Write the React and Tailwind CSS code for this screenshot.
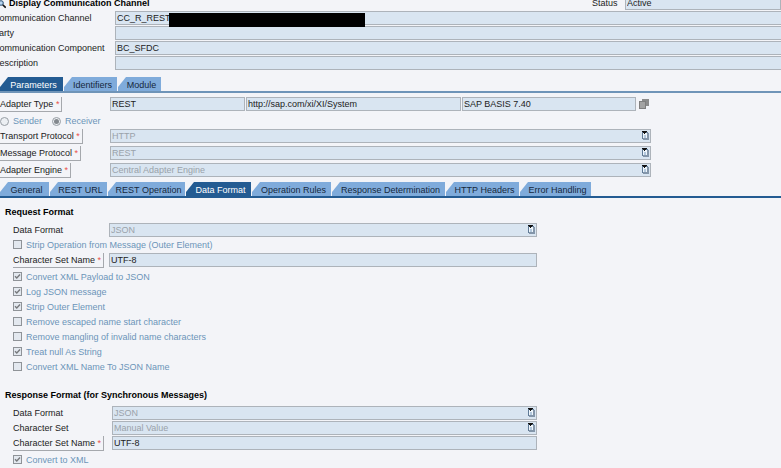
import { useState } from 'react';
import clsx from 'clsx';

const MAIN_TABS = [
  { name: 'Parameters', width: 'w-[63px]' },
  { name: 'Identifiers', width: 'w-[53px]' },
  { name: 'Module', width: 'w-[43px]' },
];

const ADAPTER_TABS = [
  { name: 'General', width: 'w-[49px]' },
  { name: 'REST URL', width: 'w-[57px]' },
  { name: 'REST Operation', width: 'w-[77px]' },
  { name: 'Data Format', width: 'w-[65px]' },
  { name: 'Operation Rules', width: 'w-[79px]' },
  { name: 'Response Determination', width: 'w-[113px]' },
  { name: 'HTTP Headers', width: 'w-[73px]' },
  { name: 'Error Handling', width: 'w-[71px]' },
];

const REQUEST_OPTIONS = [
  { label: 'Convert XML Payload to JSON', checked: true },
  { label: 'Log JSON message', checked: true },
  { label: 'Strip Outer Element', checked: true },
  { label: 'Remove escaped name start character', checked: false },
  { label: 'Remove mangling of invalid name characters', checked: false },
  { label: 'Treat null As String', checked: true },
  { label: 'Convert XML Name To JSON Name', checked: false },
];

const FIELD = 'h-[14px] w-full min-w-0 appearance-none border border-[#adb3ba] bg-[#d9e5f1] px-px leading-3';

function TextField({ id, value, label, className }) {
  return (
    <input id={id} type="text" readOnly defaultValue={value} aria-label={label} className={clsx(FIELD, 'text-[#222]', className)} />
  );
}

function SelectField({ id, value, className }) {
  return (
    <div className={clsx('relative h-[14px] w-full min-w-0', className)}>
      <select id={id} disabled className={clsx(FIELD, 'block text-[#9aa2aa] opacity-100')}>
        <option>{value}</option>
      </select>
      <svg className="pointer-events-none absolute right-[2px] top-[2px]" width="7" height="9" viewBox="0 0 7 9" shapeRendering="crispEdges">
        <rect x="0" y="1" width="6" height="7" fill="#5f7a96" />
        <rect x="1" y="7" width="6" height="2" fill="#8496aa" />
        <rect x="5" y="2" width="2" height="6" fill="#8496aa" />
        <rect x="1" y="2" width="4" height="5" fill="#eef5fb" />
        <rect x="2" y="4" width="2" height="3" fill="#b3c8dd" />
        <path d="M0 0h5v1h-1v1h-1v1h-1v-1h-1v-1h-1z" fill="#111" />
      </svg>
    </div>
  );
}

// Raised label used for mandatory fields
function RequiredLabel({ htmlFor, children }) {
  return (
    <label htmlFor={htmlFor} className="inline-block h-[15px] whitespace-nowrap border-b border-r border-[#a5a8ad] pr-[2px] leading-[14px]">
      {children} <span className="text-[#e8504a]">*</span>
    </label>
  );
}

function CheckField({ label, checked }) {
  return (
    <label className="flex h-[15px] items-center gap-1 pl-[13px] text-[#6c94b8]">
      <span className="relative flex">
        <input type="checkbox" disabled defaultChecked={checked} className="size-[9px] appearance-none border border-[#8f9398] bg-[#e3e8ef]" />
        {checked && (
          <svg className="absolute inset-0" width="9" height="9" viewBox="0 0 9 9" fill="none" stroke="#77797c" strokeWidth="1.4">
            <path d="M2 4.2 3.8 6 7 2.6" />
          </svg>
        )}
      </span>
      {label}
    </label>
  );
}

function RadioField({ label, checked }) {
  return (
    <label className="flex items-center gap-1 text-[#6c94b8]">
      <span className="relative flex">
        <input type="radio" name="direction" disabled defaultChecked={checked} className="size-[9px] appearance-none rounded-full border border-[#979da4] bg-[#eceff3]" />
        {checked && <span className="absolute inset-[2px] rounded-full bg-[#83888e]" />}
      </span>
      {label}
    </label>
  );
}

function TabStrip({ tabs, initial, className }) {
  const [active, setActive] = useState(initial);

  return (
    <div role="tablist" className={clsx('flex gap-px border-b-2', className)}>
      {tabs.map((tab) => (
        <button
          key={tab.name}
          type="button"
          role="tab"
          aria-selected={tab.name === active}
          onClick={() => setActive(tab.name)}
          className={clsx(
            'h-[14px] shrink-0 whitespace-nowrap pl-1 text-center leading-4 [clip-path:polygon(0_10px,8px_0,100%_0,100%_100%,0_100%)]',
            tab.width,
            tab.name === active ? 'bg-[#235b92] text-white' : 'bg-[#7fabdb] text-[#16283c]',
          )}
        >
          {tab.name}
        </button>
      ))}
    </div>
  );
}

function ChannelHeader() {
  return (
    <header>
      <div className="-mt-1 flex h-[14px] items-center">
        <h1 className="-ml-[6px] flex flex-1 items-center gap-[3px] font-bold text-black">
          <svg width="12" height="12" viewBox="0 0 12 12" fill="none">
            <path d="M0 1h5v8H0z" fill="#fff" stroke="#555" />
            <circle cx="7" cy="6" r="2.3" fill="#b9d6f2" stroke="#264d73" />
            <path d="m8.7 7.7 3 3" stroke="#111" strokeWidth="1.6" />
          </svg>
          Display Communication Channel
        </h1>
        <label htmlFor="status" className="w-[33px]">Status</label>
        <div className="w-[156px]">
          <TextField id="status" value="Active" className="block" />
        </div>
      </div>
      <div className="-ml-[7px] -mr-px mt-px">
        <div className="flex h-[15px]">
          <label htmlFor="channel" className="w-[122px] shrink-0 leading-[14px]">Communication Channel</label>
          <div className="relative h-[14px] flex-1">
            <TextField id="channel" value="CC_R_REST_" className="block" />
            <span className="absolute left-[54px] top-[2px] h-[14px] w-[196px] bg-black" />
          </div>
        </div>
        <div className="flex h-[15px]">
          <label htmlFor="party" className="w-[122px] shrink-0 leading-[14px]">Party</label>
          <TextField id="party" value="" />
        </div>
        <div className="flex h-[15px]">
          <label htmlFor="component" className="w-[122px] shrink-0 whitespace-nowrap leading-[14px]">Communication Component</label>
          <TextField id="component" value="BC_SFDC" />
        </div>
        <div className="flex h-[15px]">
          <label htmlFor="description" className="w-[122px] shrink-0 leading-[14px]">Description</label>
          <TextField id="description" value="" />
        </div>
      </div>
    </header>
  );
}

function AdapterSettings() {
  return (
    <section className="pt-1">
      <div className="flex h-[14px] items-start">
        <div className="flex w-[110px] shrink-0">
          <RequiredLabel htmlFor="adapterType">Adapter Type</RequiredLabel>
        </div>
        <div className="grid w-full max-w-[526px] grid-cols-[135fr_215fr_174fr] gap-px">
          <TextField id="adapterType" value="REST" />
          <TextField value="http://sap.com/xi/XI/System" label="Adapter namespace" />
          <TextField value="SAP BASIS 7.40" label="Software component version" />
        </div>
        <svg className="ml-[3px] mt-[2px] shrink-0" width="10" height="10" viewBox="0 0 10 10" shapeRendering="crispEdges">
          <path d="M3 0h7v7H3z" fill="#8c8c8c" />
          <path d="M0 2h7v8H0z" fill="#7f7f7f" />
          <path d="M1 3h5v6H1z" fill="#a3a3a3" />
        </svg>
      </div>
      <div className="flex h-[18px] items-center gap-[10px] pt-[2px]">
        <RadioField label="Sender" checked={false} />
        <RadioField label="Receiver" checked />
      </div>
      <div className="flex flex-col gap-[2px]">
        <div className="flex">
          <div className="flex w-[110px] shrink-0">
            <RequiredLabel htmlFor="transport">Transport Protocol</RequiredLabel>
          </div>
          <SelectField id="transport" value="HTTP" className="max-w-[541px]" />
        </div>
        <div className="flex">
          <div className="flex w-[110px] shrink-0">
            <RequiredLabel htmlFor="message">Message Protocol</RequiredLabel>
          </div>
          <SelectField id="message" value="REST" className="max-w-[541px]" />
        </div>
        <div className="flex">
          <div className="flex w-[110px] shrink-0">
            <RequiredLabel htmlFor="engine">Adapter Engine</RequiredLabel>
          </div>
          <SelectField id="engine" value="Central Adapter Engine" className="max-w-[541px]" />
        </div>
      </div>
    </section>
  );
}

function RequestFormat() {
  return (
    <section className="pt-[7px]">
      <h2 className="h-[18px] pl-[5px] font-bold leading-[14px] text-black">Request Format</h2>
      <div className="flex pl-[13px]">
        <label htmlFor="requestFormat" className="w-24 shrink-0 leading-[14px]">Data Format</label>
        <SelectField id="requestFormat" value="JSON" className="max-w-[428px]" />
      </div>
      <CheckField label="Strip Operation from Message (Outer Element)" checked={false} />
      <div className="flex pb-px pl-[13px] pt-px">
        <div className="flex w-24 shrink-0">
          <RequiredLabel htmlFor="requestCharset">Character Set Name</RequiredLabel>
        </div>
        <TextField id="requestCharset" value="UTF-8" className="max-w-[428px]" />
      </div>
      {REQUEST_OPTIONS.map((option) => (
        <CheckField key={option.label} label={option.label} checked={option.checked} />
      ))}
    </section>
  );
}

function ResponseFormat() {
  return (
    <section className="pt-[14px]">
      <h2 className="h-[18px] pl-[5px] font-bold leading-[14px] text-black">Response Format (for Synchronous Messages)</h2>
      <div className="flex flex-col gap-px pl-[13px]">
        <div className="flex">
          <label htmlFor="responseFormat" className="w-[99px] shrink-0 leading-[14px]">Data Format</label>
          <SelectField id="responseFormat" value="JSON" className="max-w-[425px]" />
        </div>
        <div className="flex">
          <label htmlFor="charset" className="w-[99px] shrink-0 leading-[14px]">Character Set</label>
          <SelectField id="charset" value="Manual Value" className="max-w-[425px]" />
        </div>
        <div className="flex pb-px">
          <div className="flex w-[99px] shrink-0">
            <RequiredLabel htmlFor="responseCharset">Character Set Name</RequiredLabel>
          </div>
          <TextField id="responseCharset" value="UTF-8" className="max-w-[425px]" />
        </div>
      </div>
      <CheckField label="Convert to XML" checked />
    </section>
  );
}

export default function App() {
  return (
    <main className="min-h-screen overflow-hidden bg-[#f3f4f8] font-['Liberation_Sans',Arial,sans-serif] text-[9px] leading-3 text-[#222]">
      <ChannelHeader />
      <TabStrip tabs={MAIN_TABS} initial="Parameters" className="mt-[6px] border-[#6f94b8]" />
      <AdapterSettings />
      <TabStrip tabs={ADAPTER_TABS} initial="Data Format" className="mt-1 border-[#235b92]" />
      <RequestFormat />
      <ResponseFormat />
    </main>
  );
}
